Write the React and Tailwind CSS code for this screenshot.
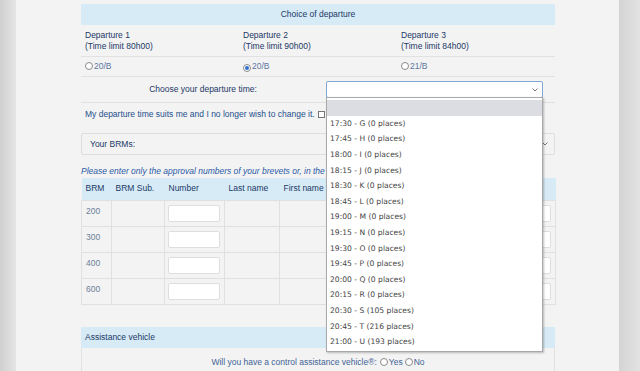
import React from 'react'

const times = [
  ['17:30', 'G', 0], ['17:45', 'H', 0], ['18:00', 'I', 0], ['18:15', 'J', 0],
  ['18:30', 'K', 0], ['18:45', 'L', 0], ['19:00', 'M', 0], ['19:15', 'N', 0],
  ['19:30', 'O', 0], ['19:45', 'P', 0], ['20:00', 'Q', 0], ['20:15', 'R', 0],
  ['20:30', 'S', 105], ['20:45', 'T', 216], ['21:00', 'U', 193],
]

const brms = ['200', '300', '400', '600']

function Radio({ checked }) {
  return (
    <span className="inline-flex w-[8px] h-[8px] rounded-full border border-[#8a8a8a] bg-white items-center justify-center mr-[1px] align-[-1px]">
      {checked && <span className="w-[4px] h-[4px] rounded-full bg-[#2f6fd0]" />}
    </span>
  )
}

function TimeSelect() {
  return (
    <div className="relative w-[217px] h-[17px]">
      <div className="h-full border border-[#7ea7d6] rounded-[2px] bg-white flex items-center justify-end pr-[4px]">
        <svg width="6" height="4" viewBox="0 0 6 4"><path d="M0.5 0.5 L3 3 L5.5 0.5" fill="none" stroke="#777" strokeWidth="1" /></svg>
      </div>
      <ul className="absolute left-0 top-[16px] w-[217px] bg-white border border-[#a9a9a9] shadow-[1px_1px_2px_rgba(0,0,0,0.25)] z-10 pt-[2px] pb-[1px] font-['DejaVu_Sans',sans-serif] text-[7.6px] text-[#444]">
        <li className="h-[15.6px] bg-[#dcdde3]" />
        {times.map(([t, l, n]) => (
          <li key={t} className="h-[15.6px] flex items-center pl-[3px]">
            {t} - {l} ({n} places)
          </li>
        ))}
      </ul>
    </div>
  )
}

export default function App() {
  return (
    <div className="h-[371px] w-[640px] overflow-hidden flex bg-[#dcdcdc] font-['Liberation_Sans',Arial,sans-serif] text-[8.5px] leading-[11px]">
      <div className="w-4 bg-gradient-to-r from-[#d0d0d0] to-[#e4e4e4]" />
      <div className="w-[603px] bg-[#f3f3f3] pl-[65px] pt-[4px]">
        <div className="w-[474px] text-[#1b3866]">
          <div className="h-[21px] bg-[#d6ebf6] flex items-center justify-center">Choice of departure</div>

          <div className="grid grid-cols-3 h-[32px] pt-[5px] border-b border-[#e1e1e1]">
            {[['1', '80h00'], ['2', '90h00'], ['3', '84h00']].map(([n, t]) => (
              <div key={n} className="pl-[4px]">
                <div>Departure {n}</div>
                <div>(Time limit {t})</div>
              </div>
            ))}
          </div>

          <div className="grid grid-cols-3 h-[20px] items-center border-b border-[#e1e1e1] text-[#5b78a0]">
            <div className="pl-[4px]"><Radio />20/B</div>
            <div className="pl-[4px]"><Radio checked />20/B</div>
            <div className="pl-[4px]"><Radio />21/B</div>
          </div>

          <div className="grid grid-cols-[244px_1fr] h-[26px] items-center border-b border-[#e1e1e1]">
            <div className="text-center">Choose your departure time:</div>
            <div className="pl-[1px]"><TimeSelect /></div>
          </div>

          <div className="h-[22px] flex items-center pl-[4px] text-[#244f8c]">
            My departure time suits me and I no longer wish to change it.
            <span className="inline-block w-[7px] h-[7px] border border-[#777] bg-white ml-[3px]" />
          </div>

          <div className="mt-[8px] h-[22px] border border-[#dedede] rounded-[2px] flex items-center justify-between pl-[8px] pr-[6px]">
            <span>Your BRMs:</span>
            <svg width="6" height="4" viewBox="0 0 6 4"><path d="M0.5 0.5 L3 3 L5.5 0.5" fill="none" stroke="#777" strokeWidth="1" /></svg>
          </div>

          <div className="mt-[11px] italic text-[#2a5aa6] whitespace-nowrap">
            Please enter only the approval numbers of your brevets or, in the
          </div>

          <table className="mt-[1px] w-[474px] border-collapse table-fixed">
            <colgroup>
              <col className="w-[30px]" /><col className="w-[53px]" /><col className="w-[60px]" />
              <col className="w-[55px]" /><col className="w-[56px]" /><col className="w-[110px]" />
              <col className="w-[50px]" /><col className="w-[60px]" />
            </colgroup>
            <thead>
              <tr className="h-[22px] bg-[#d6ebf6] text-left">
                {['BRM', 'BRM Sub.', 'Number', 'Last name', 'First name', '', '', ''].map((h, i) => (
                  <th key={i} className="font-normal pl-[4px]">{h}</th>
                ))}
              </tr>
            </thead>
            <tbody className="text-[#6d7f98]">
              {brms.map((b) => (
                <tr key={b} className="h-[26px]">
                  <td className="border border-[#e0e0e0] pl-[4px] pb-[3px]">{b}</td>
                  <td className="border border-[#e0e0e0]" />
                  <td className="border border-[#e0e0e0] pl-[3px]">
                    <div className="w-[52px] h-[17px] bg-white border border-[#dedede] rounded-[2px]" />
                  </td>
                  <td className="border border-[#e0e0e0]" />
                  <td className="border border-[#e0e0e0]" />
                  <td className="border border-[#e0e0e0]" />
                  <td className="border border-[#e0e0e0]" />
                  <td className="border border-[#e0e0e0] pr-[4px]">
                    <div className="ml-auto w-[50px] h-[17px] bg-white border border-[#dedede] rounded-[2px]" />
                  </td>
                </tr>
              ))}
            </tbody>
          </table>

          <div className="mt-[22px] h-[21px] bg-[#d6ebf6] flex items-center pl-[4px]">Assistance vehicle</div>
          <div className="h-[30px] border-x border-[#e1e1e1] flex items-center justify-center text-[#3f6394]">
            Will you have a control assistance vehicle®:
            <span className="ml-[3px]"><Radio /></span> Yes
            <span className="ml-[2px]"><Radio /></span> No
          </div>
        </div>
      </div>
      <div className="flex-1 bg-gradient-to-r from-[#d4d4d4] to-[#e2e2e2]" />
    </div>
  )
}
